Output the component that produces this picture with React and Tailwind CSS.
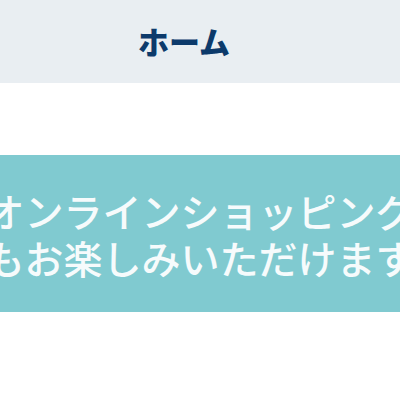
const App = () => {
  return (
    <div className="w-[400px] h-[400px] overflow-hidden bg-white font-['Noto_Sans_CJK_JP',sans-serif]">
      <header className="h-[83px] bg-[#e9eef2] flex items-center justify-center pr-[32px]">
        <h1 className="text-[31px] leading-none font-black text-[#0c3a6b] pb-[2px]">ホーム</h1>
      </header>
      <div className="h-[72px]" />
      <section className="h-[157px] bg-[#80cad0] flex flex-col items-center justify-center overflow-hidden">
        <p className="whitespace-nowrap text-[39px] leading-[45px] font-medium text-[#f6fbfc] pb-[2px]">オンラインショッピング</p>
        <p className="whitespace-nowrap text-[39px] leading-[45px] font-medium text-[#f6fbfc]">もお楽しみいただけます</p>
      </section>
    </div>
  )
}

export default App
